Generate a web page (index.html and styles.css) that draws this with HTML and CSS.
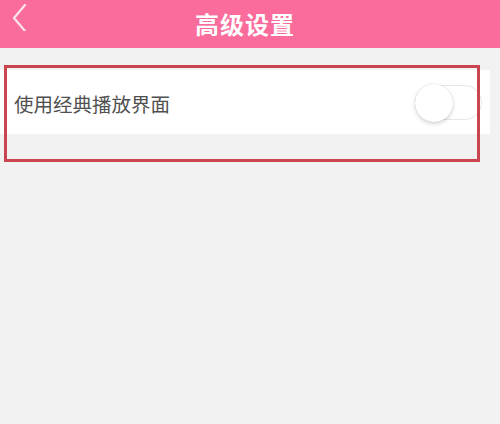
FILE: index.html
```html
<!DOCTYPE html>
<html lang="zh-CN">
<head>
<meta charset="utf-8">
<link rel="stylesheet" href="styles.css">
</head>
<body>
<div class="page">
  <header class="topbar">
    <svg class="back" width="20" height="30" viewBox="0 0 20 30"><polyline points="14,4 3,17 14,30" fill="none" stroke="#fbe3ec" stroke-width="2.2" stroke-linecap="round" stroke-linejoin="round"/></svg>
    <h1 class="title">高级设置</h1>
  </header>
  <main class="content">
    <div class="row">
      <span class="label">使用经典播放界面</span>
      <span class="switch"><span class="knob"></span></span>
    </div>
  </main>
  <div class="highlight"></div>
</div>
</body>
</html>
```
FILE: styles.css
```css
html, body {
  margin: 0;
  padding: 0;
}
body {
  background: #f2f2f2;
  font-family: "Noto Sans CJK SC", "Noto Sans", sans-serif;
}
.page {
  position: relative;
  width: 500px;
  height: 424px;
  overflow: hidden;
}
.topbar {
  height: 48px;
  background: #fa6c9c;
  display: flex;
  align-items: center;
  justify-content: center;
  position: relative;
}
.back {
  position: absolute;
  left: 11px;
  top: 1px;
}
.title {
  margin: 0 10px 0 0;
  color: #ffffff;
  font-size: 24px;
  font-weight: 700;
  letter-spacing: 1px;
  line-height: 1;
}
.content {
  padding-top: 22px;
}
.row {
  width: 490px;
  height: 64px;
  background: #ffffff;
  display: flex;
  align-items: center;
  justify-content: space-between;
  box-sizing: border-box;
  padding: 0 8px 0 14px;
}
.label {
  font-size: 19.5px;
  color: #505050;
  margin-top: 2px;
}
.switch {
  width: 67px;
  height: 35px;
  border: 1.5px solid #e6e6e6;
  border-radius: 19px;
  background: #ffffff;
  display: flex;
  align-items: center;
  box-sizing: border-box;
  position: relative;
  margin-top: 1px;
}
.knob {
  width: 38px;
  height: 38px;
  border-radius: 50%;
  background: #ffffff;
  box-shadow: 0 2px 4px rgba(0,0,0,0.16), 0 0 1px rgba(0,0,0,0.2);
  margin-left: -1px;
}
.highlight {
  position: absolute;
  left: 4px;
  top: 65px;
  width: 476px;
  height: 97px;
  border: 3px solid #c9454f;
  box-sizing: border-box;
}
```
